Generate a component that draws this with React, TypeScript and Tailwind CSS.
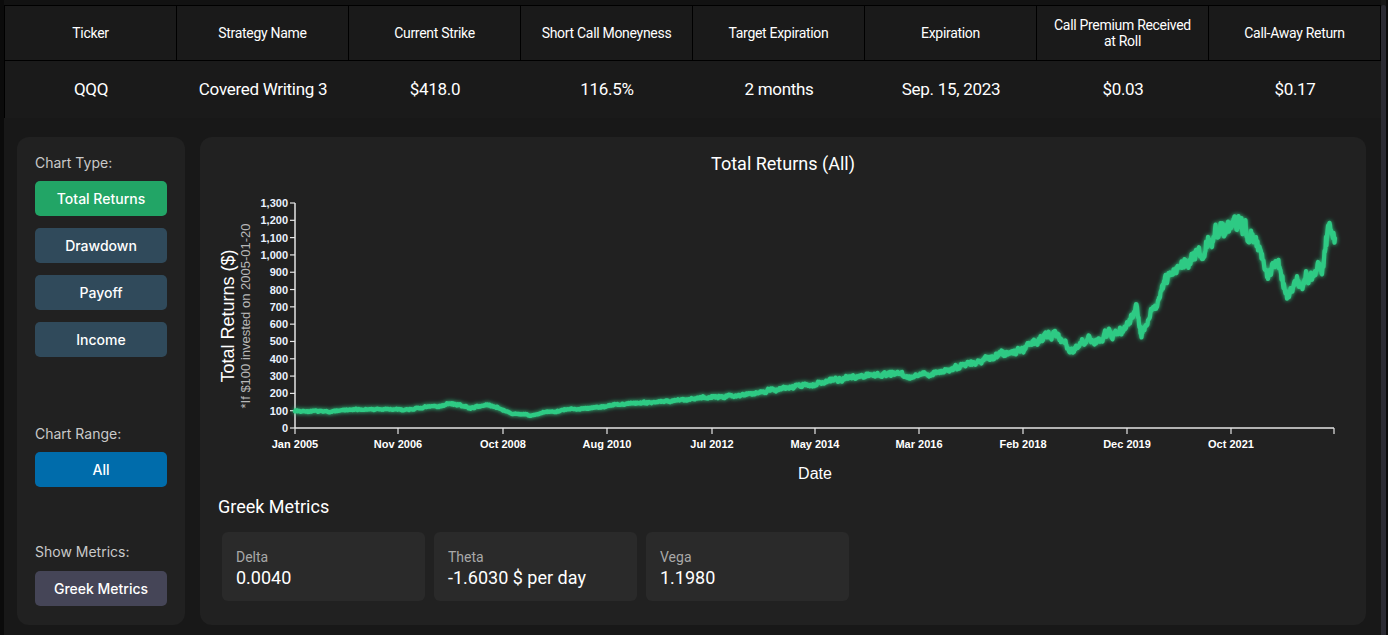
import React from "react";

const KEY: [number, number][] = [
  [295, 100], [310, 97], [330, 95], [345, 103], [370, 108], [390, 108], [400, 105], [415, 112],
  [430, 122], [440, 128], [449, 140], [458, 135], [470, 115], [480, 128], [488, 132], [497, 122],
  [505, 100], [512, 80], [525, 80], [530, 70], [545, 90], [565, 105], [585, 115], [600, 120],
  [610, 130], [625, 140], [650, 150], [670, 155], [690, 165], [700, 180], [720, 178], [745, 195],
  [770, 220], [790, 235], [815, 255], [835, 275], [855, 300], [880, 310], [900, 320], [908, 290],
  [918, 310], [935, 315], [950, 340], [975, 375], [1000, 425], [1020, 450], [1030, 490], [1045, 520],
  [1057, 550], [1065, 500], [1072, 440], [1080, 480], [1090, 520], [1095, 500], [1105, 540], [1115, 550],
  [1125, 580], [1133, 640], [1137, 700], [1139, 600], [1141, 520], [1150, 640], [1160, 760], [1168, 900],
  [1172, 860], [1180, 950], [1190, 980], [1200, 1000], [1207, 1050], [1212, 1090], [1218, 1120], [1225, 1150],
  [1232, 1210], [1238, 1200], [1244, 1150], [1250, 1100], [1255, 1110], [1260, 1000], [1264, 940], [1268, 830],
  [1272, 900], [1277, 1000], [1282, 880], [1287, 790], [1292, 820], [1297, 850], [1302, 790], [1307, 880],
  [1312, 860], [1318, 920], [1322, 950], [1327, 1090], [1330, 1170], [1333, 1130], [1335, 1100],
];

function mulberry32(a: number) {
  return function () {
    a |= 0;
    a = (a + 0x6d2b79f5) | 0;
    let t = Math.imul(a ^ (a >>> 15), 1 | a);
    t = (t + Math.imul(t ^ (t >>> 7), 61 | t)) ^ t;
    return ((t ^ (t >>> 14)) >>> 0) / 4294967296;
  };
}

const OX = 200;
const OY = 180;
const X0 = 295 - OX;
const X1 = 1334 - OX;
const YB = 428 - OY;
const YT = 203 - OY;
const vy = (v: number) => YB - (v * (YB - YT)) / 1300;

function buildPath() {
  const rnd = mulberry32(7);
  let r = 0;
  const pts: string[] = [];
  let k = 0;
  for (let x = 295; x <= 1335; x += 0.5) {
    while (k < KEY.length - 2 && KEY[k + 1][0] < x) k++;
    const [xa, va] = KEY[k];
    const [xb, vb] = KEY[k + 1];
    const t = Math.min(1, Math.max(0, (x - xa) / (xb - xa)));
    const v = va + (vb - va) * t;
    r = r * 0.75 + (rnd() - 0.5) * 0.05;
    const spike = (rnd() - 0.5) * 0.04;
    const val = v * (1 + r + spike);
    pts.push(`${(x - OX).toFixed(1)},${vy(val).toFixed(1)}`);
  }
  return "M" + pts.join(" L");
}

const PATH = buildPath();

const yTicks = [0, 100, 200, 300, 400, 500, 600, 700, 800, 900, 1000, 1100, 1200, 1300];
const xTicks: [number, string][] = [
  [295, "Jan 2005"], [398, "Nov 2006"], [503, "Oct 2008"], [607, "Aug 2010"], [712, "Jul 2012"],
  [815, "May 2014"], [919, "Mar 2016"], [1023, "Feb 2018"], [1127, "Dec 2019"], [1231, "Oct 2021"], [1334, ""],
];

function Chart() {
  return (
    <svg width={1166} height={310} className="block">
      <defs>
        <filter id="glow" x="-5%" y="-20%" width="110%" height="140%">
          <feGaussianBlur stdDeviation="2.2" result="b" />
          <feMerge>
            <feMergeNode in="b" />
            <feMergeNode in="SourceGraphic" />
          </feMerge>
        </filter>
      </defs>
      <text
        transform={`translate(${234 - OX},${316 - OY}) rotate(-90)`}
        textAnchor="middle"
        fill="#ffffff"
        fontSize="18"
        fontFamily="'Liberation Sans', Arial, sans-serif"
      >
        Total Returns ($)
      </text>
      <text
        transform={`translate(${250 - OX},${316 - OY}) rotate(-90)`}
        textAnchor="middle"
        fill="#b8b8b8"
        fontSize="13"
        fontFamily="'Liberation Sans', Arial, sans-serif"
      >
        *If $100 invested on 2005-01-20
      </text>
      <line x1={X0} y1={YT} x2={X0} y2={YB} stroke="#e5e5e5" strokeWidth={1.5} />
      <line x1={X0} y1={YB} x2={X1} y2={YB} stroke="#e5e5e5" strokeWidth={1.5} />
      {yTicks.map((v) => (
        <g key={v}>
          <line x1={X0 - 5} x2={X0} y1={vy(v)} y2={vy(v)} stroke="#e5e5e5" strokeWidth={1.2} />
          <text
            x={X0 - 7}
            y={vy(v) + 4}
            textAnchor="end"
            fill="#eaf2ff"
            fontSize="11"
            fontWeight="bold"
            fontFamily="'Liberation Sans', Arial, sans-serif"
          >
            {v.toLocaleString("en-US")}
          </text>
        </g>
      ))}
      {xTicks.map(([x, l]) => (
        <g key={x}>
          <line x1={x - OX} x2={x - OX} y1={YB} y2={YB + 6} stroke="#e5e5e5" strokeWidth={1.2} />
          {l && (
            <text
              x={x - OX}
              y={YB + 20}
              textAnchor="middle"
              fill="#ffffff"
              fontSize="11"
              fontWeight="bold"
              fontFamily="'Liberation Sans', Arial, sans-serif"
            >
              {l}
            </text>
          )}
        </g>
      ))}
      <text
        x={815 - OX}
        y={479 - OY}
        textAnchor="middle"
        fill="#ffffff"
        fontSize="16"
        fontFamily="'Liberation Sans', Arial, sans-serif"
      >
        Date
      </text>
      <path d={PATH} fill="none" stroke="#2fca84" strokeWidth={4.2} strokeLinejoin="round" strokeLinecap="round" filter="url(#glow)" />
    </svg>
  );
}

const headers = [
  "Ticker",
  "Strategy Name",
  "Current Strike",
  "Short Call Moneyness",
  "Target Expiration",
  "Expiration",
  "Call Premium Received at Roll",
  "Call-Away Return",
];
const values = ["QQQ", "Covered Writing 3", "$418.0", "116.5%", "2 months", "Sep. 15, 2023", "$0.03", "$0.17"];

function SideBtn({ label, cls }: { label: string; cls: string }) {
  return (
    <div className={`h-[35px] w-[132px] rounded-[5px] flex items-center justify-center text-[14px] text-white font-medium ${cls}`}>
      {label}
    </div>
  );
}

function Metric({ label, value }: { label: string; value: string }) {
  return (
    <div className="w-[203px] h-[69px] rounded-[6px] bg-[#2a2a2a] pl-[14px] pt-[16px]">
      <div className="text-[14px] leading-[18px] text-[#a8a8a8]">{label}</div>
      <div className="text-[18px] leading-[22px] text-white mt-[1px]">{value}</div>
    </div>
  );
}

export default function App() {
  return (
    <div className="w-[1388px] h-[635px] bg-[#181818] flex overflow-hidden" style={{ fontFamily: "Roboto, 'Noto Sans', sans-serif" }}>
      <div className="w-[4px] h-full bg-[#0b0b0b] shrink-0" />
      <div className="w-[1377px] flex flex-col shrink-0">
        <div className="h-[5px] bg-[#121212]" />
        <div className="grid grid-cols-8 border-t border-l border-black bg-[#1a1a1a]">
          {headers.map((h) => (
            <div
              key={h}
              className="h-[55px] border-r border-b border-black flex items-center justify-center text-center text-[14px] leading-[16px] text-white px-[14px] tracking-[-0.3px]"
            >
              {h}
            </div>
          ))}
          {values.map((v, i) => (
            <div key={i} className="h-[57px] flex items-center justify-center text-[17px] text-white tracking-[-0.3px]">
              {v}
            </div>
          ))}
        </div>
        <div className="flex pl-[13px] pr-[15px] pt-[19px] gap-[15px]">
          <div
            className="w-[168px] h-[488px] rounded-[12px] bg-[#212121] pl-[18px] pt-[17px] flex flex-col"
            style={{ fontFamily: "Inter, 'Noto Sans', sans-serif" }}
          >
            <div className="text-[14px] leading-[18px] text-[#c9c9c9]">Chart Type:</div>
            <div className="flex flex-col gap-[12px] mt-[9px]">
              <SideBtn label="Total Returns" cls="bg-[#22a566]" />
              <SideBtn label="Drawdown" cls="bg-[#304a5b]" />
              <SideBtn label="Payoff" cls="bg-[#304a5b]" />
              <SideBtn label="Income" cls="bg-[#304a5b]" />
            </div>
            <div className="text-[14px] leading-[18px] text-[#c9c9c9] mt-[68px]">Chart Range:</div>
            <div className="mt-[9px]">
              <SideBtn label="All" cls="bg-[#006cab]" />
            </div>
            <div className="text-[14px] leading-[18px] text-[#c9c9c9] mt-[56px]">Show Metrics:</div>
            <div className="mt-[10px]">
              <SideBtn label="Greek Metrics" cls="bg-[#454557]" />
            </div>
          </div>
          <div className="w-[1166px] h-[488px] rounded-[12px] bg-[#212121] flex flex-col">
            <div className="text-center text-[18px] leading-[22px] text-white pt-[16px]">Total Returns (All)</div>
            <div className="mt-[5px]">
              <Chart />
            </div>
            <div className="pl-[18px] text-[18px] leading-[22px] text-white mt-[6px]">Greek Metrics</div>
            <div className="flex gap-[9px] pl-[22px] mt-[14px]">
              <Metric label="Delta" value="0.0040" />
              <Metric label="Theta" value="-1.6030 $ per day" />
              <Metric label="Vega" value="1.1980" />
            </div>
          </div>
        </div>
      </div>
      <div className="w-[5px] h-full pt-[5px] shrink-0 bg-[#181818]">
        <div className="h-full w-full rounded-t-[3px] bg-[#2b2b33]" />
      </div>
      <div className="w-[2px] h-full bg-[#0b0b0b] shrink-0" />
    </div>
  );
}
